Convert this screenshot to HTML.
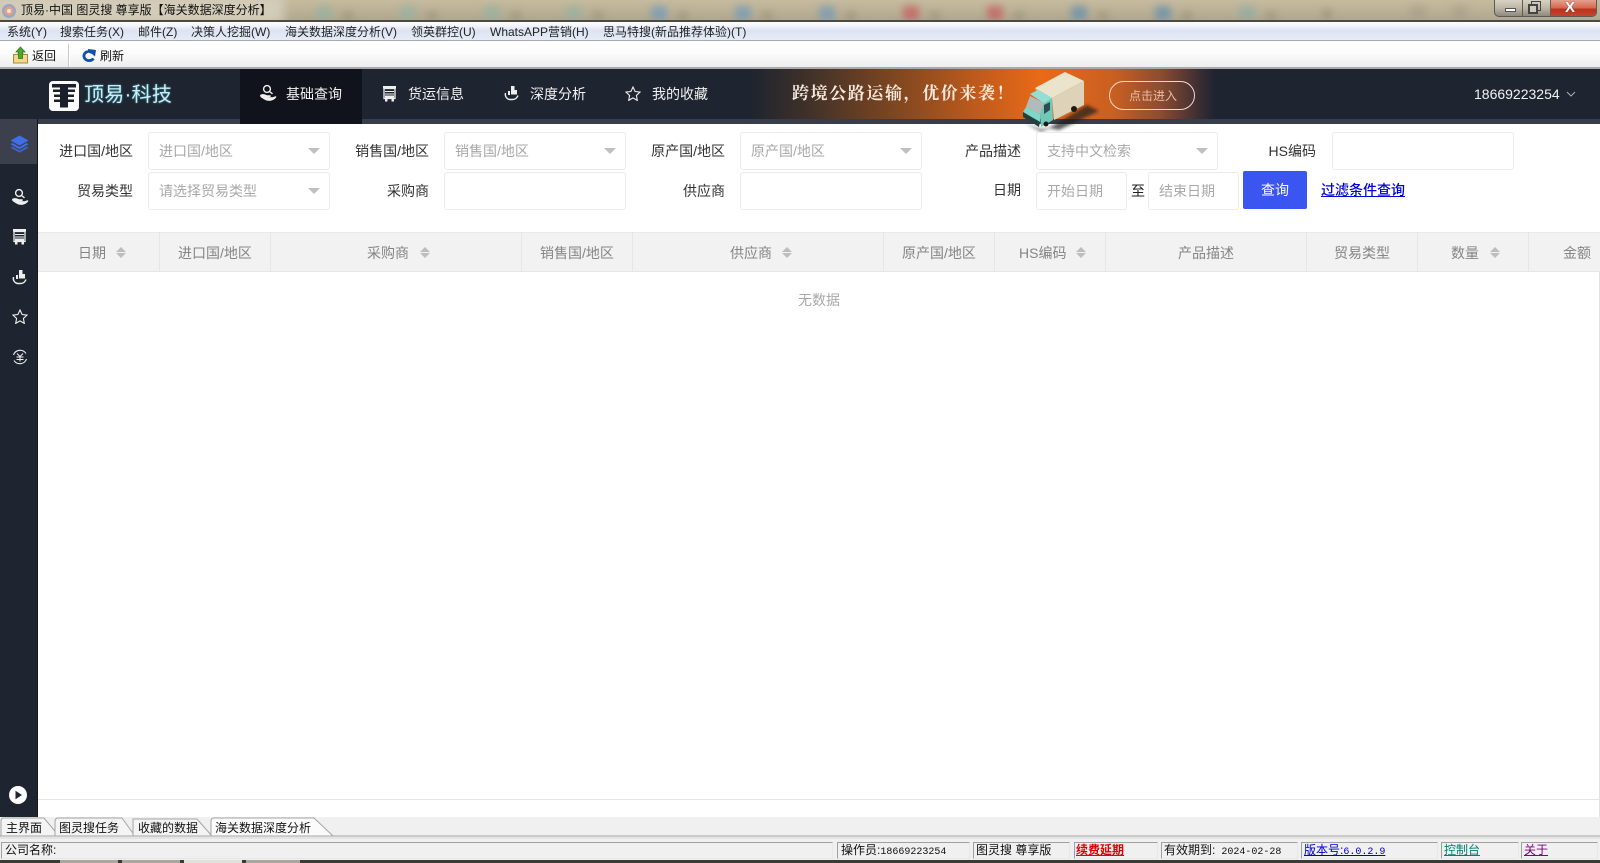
<!DOCTYPE html>
<html lang="zh"><head><meta charset="utf-8"><title>顶易·中国 图灵搜 尊享版</title>
<style>
*{box-sizing:border-box;margin:0;padding:0}
html,body{width:1600px;height:863px;overflow:hidden;background:#fff}
body{position:relative;font-family:"Liberation Sans","Noto Sans CJK SC",sans-serif;font-size:14px;color:#333}
.a{position:absolute}
.t{position:absolute;white-space:nowrap}
.m{font-size:12px;line-height:18px;top:23px;color:#222}
.n{font-size:14px;line-height:20px;top:84px;color:#f2f2f2}
.l{top:0;font-size:14px;line-height:20px;text-align:right;color:#333;white-space:nowrap;position:absolute}
.r1{top:141px}.r2{top:181px}
.i{position:absolute;background:#fff;border:1px solid #ebebeb;border-radius:3px;height:38px;color:#a8a8a8;font-size:14px;line-height:37px;padding-left:10px;white-space:nowrap}
.i.s:after{content:"";position:absolute;right:9px;top:15px;border:6px solid transparent;border-top:6px solid #c0c0c0;border-bottom:0}
.h{position:absolute;top:243px;font-size:14px;line-height:20px;color:#858585;white-space:nowrap}
.c{position:absolute;top:232px;width:1px;height:40px;background:#e6e6e6}
.u{position:absolute;top:247px;width:10px;height:11px}
.u:before,.u:after{content:"";position:absolute;left:0;border:5px solid transparent}
.u:before{top:0;border-top:0;border-bottom:5px solid #bdbdbd}
.u:after{bottom:0;border-bottom:0;border-top:5px solid #bdbdbd}
.st{position:absolute;top:842px;height:17px;background:#f0f0f0;border:1px solid;border-color:#a0a0a0 #e8e8e8 #e8e8e8 #a0a0a0;font-size:12px;line-height:15px;color:#111;white-space:nowrap;padding-left:2px}
.mono{font-family:"Liberation Mono",monospace;font-size:10px}
.blob{position:absolute;filter:blur(4px);border-radius:3px;top:6px;width:16px;height:14px;opacity:.6;box-shadow:24px 3px 0 -3px #8f8873}
</style></head><body>

<!-- title bar -->
<div class="a" style="left:0;top:0;width:1600px;height:21px;overflow:hidden;background:linear-gradient(180deg,#c6bb9f 0,#b9af94 60%,#aea690 100%)">
<div class="blob" style="left:316px;background:#8db3a6"></div>
<div class="blob" style="left:400px;background:#8db3a6"></div>
<div class="blob" style="left:484px;background:#8db3a6"></div>
<div class="blob" style="left:566px;background:#8db3a6"></div>
<div class="blob" style="left:651px;background:#5f95c4"></div>
<div class="blob" style="left:735px;background:#5f95c4"></div>
<div class="blob" style="left:819px;background:#5f95c4"></div>
<div class="blob" style="left:903px;background:#c8454e"></div>
<div class="blob" style="left:987px;background:#c8454e"></div>
<div class="blob" style="left:1071px;background:#4f86b8"></div>
<div class="blob" style="left:1155px;background:#4f86b8"></div>
<div class="blob" style="left:1239px;background:#84aca8"></div>
<div class="blob" style="left:1323px;width:8px;top:10px;height:8px;background:#7d7662;box-shadow:none"></div>
<div class="blob" style="left:1410px;background:#a59c85;box-shadow:none"></div>
<div class="blob" style="left:1452px;background:#a59c85;box-shadow:none"></div>
<div class="a" style="left:-6px;top:-6px;width:290px;height:30px;background:#d2ccb9;filter:blur(5px)"></div>
</div>
<svg class="a" style="left:1px;top:2px" width="16" height="18" viewBox="0 0 16 18"><circle cx="8" cy="9" r="7" fill="#9aa7c4"/><circle cx="8" cy="9" r="4.500" fill="#e8a080"/><circle cx="8" cy="9" r="2" fill="#e8e4e4"/></svg>
<div class="t" style="left:21px;top:1px;font-size:12px;line-height:19px;color:#111">顶易·中国 图灵搜 尊享版【海关数据深度分析】</div>
<!-- window controls -->
<div class="a" style="left:1494px;top:-1px;width:103px;height:18px;border:1px solid #5a5a58;border-radius:0 0 5px 5px;background:linear-gradient(180deg,#d8d2c4 0,#bdb6a4 50%,#8f8a7e 100%);overflow:hidden">
<div class="a" style="left:55px;top:0;width:46px;height:17px;background:linear-gradient(180deg,#e3a090 0,#d96a50 45%,#b8331f 55%,#c8452f 100%);border-left:1px solid #6f5a50"></div>
<div class="a" style="left:27px;top:0;width:1px;height:17px;background:#5f5c55"></div>
<div class="a" style="left:10px;top:8px;width:11px;height:4px;background:#fff;border:1px solid #555"></div>
<div class="a" style="left:36px;top:1px;width:10px;height:10px;border:1px solid #444"></div>
<div class="a" style="left:33px;top:4px;width:10px;height:10px;border:2px solid #444;background:#cfc9b9"></div>
<div class="t" style="left:70px;top:-1px;font:bold 15px/17px 'Liberation Sans',sans-serif;color:#fff;text-shadow:0 0 1px #333">X</div>
</div>
<div class="a" style="left:0;top:20px;width:1600px;height:2px;background:#4c4a44"></div>

<!-- menu -->
<div class="a" style="left:0;top:22px;width:1600px;height:19px;background:linear-gradient(180deg,#fdfdfe 0,#f4f6fb 20%,#dde3f3 45%,#e6ebf6 100%);border-bottom:1px solid #a6aab4"></div>
<div class="t m" style="left:7px">系统(Y)</div>
<div class="t m" style="left:60px">搜索任务(X)</div>
<div class="t m" style="left:138px">邮件(Z)</div>
<div class="t m" style="left:191px">决策人挖掘(W)</div>
<div class="t m" style="left:285px">海关数据深度分析(V)</div>
<div class="t m" style="left:411px">领英群控(U)</div>
<div class="t m" style="left:490px">WhatsAPP营销(H)</div>
<div class="t m" style="left:603px">思马特搜(新品推荐体验)(T)</div>

<!-- toolbar -->
<div class="a" style="left:0;top:41px;width:1600px;height:28px;background:linear-gradient(180deg,#fff 0,#fcfcfc 45%,#eeeeee 100%);border-bottom:2px solid #a9a9a9"></div>
<svg class="a" style="left:12px;top:46px" width="17" height="18" viewBox="0 0 17 18"><path d="M1.500 8.500h4l1-1.500h4l1 1.500h4v8.500h-14z" fill="#f3d888" stroke="#a58a3c"/><path d="M8.500 1l4.500 5h-2.500v6.500h-4v-6.500h-2.500z" fill="#4ea82e" stroke="#2f7a1c" stroke-width=".8"/></svg>
<div class="t" style="left:32px;top:47px;font-size:12px;line-height:18px;color:#111">返回</div>
<div class="a" style="left:68px;top:44px;width:2px;height:23px;background:linear-gradient(90deg,#c8c8c8 50%,#fff 50%)"></div>
<svg class="a" style="left:81px;top:49px" width="15" height="13" viewBox="0 0 15 13"><path d="M12.500 9.500A5.200 4.600 0 1 1 7 2.500" fill="none" stroke="#1450a8" stroke-width="2.800"/><path d="M7 0l8 1-1 6.500-3-2.500-4-1.500z" fill="#1450a8"/></svg>
<div class="t" style="left:100px;top:47px;font-size:12px;line-height:18px;color:#111">刷新</div>

<!-- nav -->
<div class="a" style="left:0;top:69px;width:1600px;height:50px;background:#1e2430"></div>
<div class="a" style="left:0;top:119px;width:1600px;height:5px;background:#393c49"></div>
<div class="a" style="left:750px;top:69px;width:465px;height:50px;background:linear-gradient(90deg,#1e2430 0,#3e3029 55px,#7a4521 140px,#bd5a1c 225px,#e96a18 290px,#c85f22 365px,#8d4c30 410px,#3a2d33 450px,#1e2430 465px)"></div>
<div class="a" style="left:240px;top:69px;width:122px;height:55px;background:#10131b"></div>

<!-- logo -->
<div class="a" style="left:49px;top:81px;width:30px;height:30px;background:#fafafa;border-radius:4px"></div>
<svg class="a" style="left:49px;top:81px" width="30" height="30" viewBox="0 0 30 30"><path d="M3 3h24v3.500H19v2h7v2.500h-7v2.500h6v2.500h-6v2.500h6v2.500h-6v5.500h-8v-5.500H5v-2.500h6v-2.500H5v-2.500h6v-2.500H4v-2.500h7v-2H3z" fill="#1b1f2a"/></svg>
<div class="t" style="left:84px;top:80px;font-size:20px;letter-spacing:.3px;line-height:30px;color:#cdeef0;text-shadow:0 0 2px #3aa7c7">顶易·科技</div>

<!-- nav items -->
<svg class="a" style="left:259px;top:84px" width="18" height="19" viewBox="0 0 18 19"><circle cx="8" cy="5" r="3.400" fill="none" stroke="#f0f0f0" stroke-width="1.400"/><path d="M10.500 7.500l3 2.300" stroke="#f0f0f0" stroke-width="1.400"/><path d="M1 11c2.500-1.500 5-1 7 .3h3c1 0 1 1.700 0 1.700H8l5.500.3 3-1c1 0 1 .8.500 1.300-2 2.400-5 3.600-8 3.200-3-.4-5.500-2.500-7.500-3.800z" fill="#f0f0f0"/></svg>
<div class="t n" style="left:286px">基础查询</div>
<svg class="a" style="left:382px;top:85px" width="15" height="17" viewBox="0 0 15 17"><path d="M1 1h13v2.500H1z" fill="#eee"/><path d="M2 3.500h11v10H2z" fill="none" stroke="#eee" stroke-width="1.300"/><path d="M3 6.500h9M3 9h9" stroke="#eee" stroke-width=".9"/><path d="M3 10.500h9v3H3z" fill="#eee"/><path d="M3 14h2.500v2.500H3zM9.500 14H12v2.500H9.500z" fill="#eee"/></svg>
<div class="t n" style="left:408px">货运信息</div>
<svg class="a" style="left:504px;top:85px" width="15" height="16" viewBox="0 0 15 16"><path d="M7 1h3.500v8.500H7zM10.500 5H13v4.500h-2.500zM4 6h2v4H4z" fill="#eee"/><path d="M1.500 8c-.8 3 1 6 4 6.500h3c2.500 0 4.500-1.500 5.500-4" fill="none" stroke="#eee" stroke-width="1.400"/></svg>
<div class="t n" style="left:530px">深度分析</div>
<svg class="a" style="left:625px;top:86px" width="16" height="15" viewBox="0 0 16 15"><path d="M8 1l2.100 4.500 4.900.6-3.600 3.400.9 4.900L8 11.900l-4.300 2.500.9-4.900L1 6.100l4.900-.6z" fill="none" stroke="#eee" stroke-width="1.100"/></svg>
<div class="t n" style="left:652px">我的收藏</div>

<!-- banner -->
<div class="t" style="left:792px;top:81px;font-family:'Liberation Serif','Noto Serif CJK SC',serif;font-weight:700;font-size:17px;line-height:26px;letter-spacing:1.600px;color:#f6e8dc">跨境公路运输，优价来袭！</div>
<svg class="a" style="left:1015px;top:65px" width="90" height="68" viewBox="0 0 90 68">
<defs><filter id="b" x="-30%" y="-30%" width="160%" height="160%"><feGaussianBlur stdDeviation="1.600"/></filter></defs>
<path d="M34 63L72 40 84 46 44 65z" fill="#1a1a1a" opacity=".7" filter="url(#b)"/>
<path d="M10 58L26 64 38 62 26 67z" fill="#222" opacity=".6" filter="url(#b)"/>
<path d="M20 23L50 7 69 16 37 33z" fill="#ebe4cd"/>
<path d="M37 33L69 16V40L39 55z" fill="#dcd3b8"/>
<path d="M20 23L37 33V38L24 30z" fill="#e2b99a"/>
<path d="M15 29L23 25 37 33 30 39z" fill="#90e0d5"/>
<path d="M11 42L15 31 29 38 25 49z" fill="#b0bcb9"/>
<path d="M8 47L11 42 25 49 25 57z" fill="#80d6c9"/>
<path d="M8 47L25 57 24 62 8 52z" fill="#23403c"/>
<path d="M29 38L37 33 38 55 26 62 25 49z" fill="#6fc9b9"/>
<path d="M29 40L35 37V45L29 49z" fill="#2f4a50"/>
<circle cx="31" cy="59" r="2.500" fill="#1a1a1a"/><circle cx="59" cy="44" r="3" fill="#1a1a1a"/>
</svg>
<div class="a" style="left:1109px;top:81px;width:86px;height:29px;border:1px solid #f3d8c4;border-radius:15px"></div>
<div class="t" style="left:1129px;top:86px;font-size:12px;line-height:20px;color:#e6bfa4">点击进入</div>

<div class="t" style="left:1474px;top:84px;font-size:14px;line-height:20px;color:#f2f2f2">18669223254</div>
<svg class="a" style="left:1566px;top:91px" width="10" height="7" viewBox="0 0 10 7"><path d="M1 1l4 4 4-4" fill="none" stroke="#aab0bb"/></svg>

<!-- sidebar -->
<div class="a" style="left:0;top:119px;width:37px;height:698px;background:#1e2430"></div>
<div class="a" style="left:37px;top:119px;width:1px;height:698px;background:#14171f"></div>
<div class="a" style="left:0;top:119px;width:37px;height:45px;background:#3c3f4c"></div>
<svg class="a" style="left:10px;top:135px" width="19" height="18" viewBox="0 0 19 18"><path d="M9.500 .5L18.500 5.500 9.500 10.500 .5 5.500z" fill="#3f6fe8"/><path d="M2.500 8l7 4 7-4 2 1.200-9 5-9-5z" fill="#3f6fe8"/><path d="M2.500 11.500l7 4 7-4 2 1.200-9 5-9-5z" fill="#3f6fe8" opacity=".75"/></svg>
<svg class="a" style="left:11px;top:188px" width="18" height="19" viewBox="0 0 18 19"><circle cx="8" cy="5" r="3.400" fill="none" stroke="#f0f0f0" stroke-width="1.400"/><path d="M10.500 7.500l3 2.300" stroke="#f0f0f0" stroke-width="1.400"/><path d="M1 11c2.500-1.500 5-1 7 .3h3c1 0 1 1.700 0 1.700H8l5.500.3 3-1c1 0 1 .8.500 1.300-2 2.400-5 3.600-8 3.200-3-.4-5.500-2.500-7.500-3.800z" fill="#f0f0f0"/></svg>
<svg class="a" style="left:12px;top:228px" width="15" height="17" viewBox="0 0 15 17"><path d="M1 1h13v2.500H1z" fill="#eee"/><path d="M2 3.500h11v10H2z" fill="none" stroke="#eee" stroke-width="1.300"/><path d="M3 6.500h9M3 9h9" stroke="#eee" stroke-width=".9"/><path d="M3 10.500h9v3H3z" fill="#eee"/><path d="M3 14h2.500v2.500H3zM9.500 14H12v2.500H9.500z" fill="#eee"/></svg>
<svg class="a" style="left:12px;top:269px" width="15" height="16" viewBox="0 0 15 16"><path d="M7 1h3.500v8.500H7zM10.500 5H13v4.500h-2.500zM4 6h2v4H4z" fill="#eee"/><path d="M1.500 8c-.8 3 1 6 4 6.500h3c2.500 0 4.500-1.500 5.500-4" fill="none" stroke="#eee" stroke-width="1.400"/></svg>
<svg class="a" style="left:12px;top:309px" width="16" height="15" viewBox="0 0 16 15"><path d="M8 1l2.100 4.500 4.900.6-3.600 3.400.9 4.900L8 11.900l-4.300 2.500.9-4.900L1 6.100l4.900-.6z" fill="none" stroke="#eee" stroke-width="1.100"/></svg>
<svg class="a" style="left:12px;top:349px" width="16" height="16" viewBox="0 0 16 16"><path d="M1.500 6A7 7 0 0 1 14 4.500M14.500 10A7 7 0 0 1 2 11.500" fill="none" stroke="#eee" stroke-width="1.100"/><path d="M5 4.500l3 3 3-3M4.500 8h7M4.500 10.500h7M8 7.500v5" fill="none" stroke="#eee" stroke-width="1"/></svg>
<svg class="a" style="left:9px;top:786px" width="18" height="18" viewBox="0 0 18 18"><circle cx="9" cy="9" r="9" fill="#fff"/><path d="M6.500 4.800L13 9 6.500 13.200z" fill="#1e2430"/></svg>

<!-- form -->
<div class="l r1" style="left:38px;width:95px">进口国/地区</div>
<div class="i s" style="left:148px;top:132px;width:182px">进口国/地区</div>
<div class="l r1" style="left:334px;width:95px">销售国/地区</div>
<div class="i s" style="left:444px;top:132px;width:182px">销售国/地区</div>
<div class="l r1" style="left:630px;width:95px">原产国/地区</div>
<div class="i s" style="left:740px;top:132px;width:182px">原产国/地区</div>
<div class="l r1" style="left:926px;width:95px">产品描述</div>
<div class="i s" style="left:1036px;top:132px;width:182px">支持中文检索</div>
<div class="l r1" style="left:1222px;width:94px">HS编码</div>
<div class="i" style="left:1332px;top:132px;width:182px"></div>

<div class="l r2" style="left:38px;width:95px">贸易类型</div>
<div class="i s" style="left:148px;top:172px;width:182px">请选择贸易类型</div>
<div class="l r2" style="left:334px;width:95px">采购商</div>
<div class="i" style="left:444px;top:172px;width:182px"></div>
<div class="l r2" style="left:630px;width:95px">供应商</div>
<div class="i" style="left:740px;top:172px;width:182px"></div>
<div class="l" style="left:926px;top:180px;width:95px">日期</div>
<div class="i" style="left:1036px;top:172px;width:91px">开始日期</div>
<div class="t" style="left:1131px;top:181px;font-size:14px;line-height:20px;color:#222">至</div>
<div class="i" style="left:1148px;top:172px;width:91px">结束日期</div>
<div class="a" style="left:1243px;top:171px;width:64px;height:38px;background:#3b55f0;border-radius:2px;color:#fff;font-size:14px;line-height:38px;text-align:center">查询</div>
<div class="t" style="left:1321px;top:180px;font-size:14px;line-height:20px;color:#0000d8;text-decoration:underline;font-weight:500">过滤条件查询</div>

<!-- table header -->
<div class="a" style="left:38px;top:232px;width:1562px;height:40px;background:#f2f2f2;border-top:1px solid #e9e9e9;border-bottom:1px solid #e6e6e6"></div>
<div class="c" style="left:159px"></div><div class="c" style="left:270px"></div><div class="c" style="left:521px"></div><div class="c" style="left:632px"></div><div class="c" style="left:883px"></div><div class="c" style="left:994px"></div><div class="c" style="left:1105px"></div><div class="c" style="left:1306px"></div><div class="c" style="left:1417px"></div><div class="c" style="left:1528px"></div>
<div class="h" style="left:78px">日期</div><div class="u" style="left:116px"></div>
<div class="h" style="left:178px">进口国/地区</div>
<div class="h" style="left:367px">采购商</div><div class="u" style="left:420px"></div>
<div class="h" style="left:540px">销售国/地区</div>
<div class="h" style="left:730px">供应商</div><div class="u" style="left:782px"></div>
<div class="h" style="left:902px">原产国/地区</div>
<div class="h" style="left:1019px">HS编码</div><div class="u" style="left:1076px"></div>
<div class="h" style="left:1178px">产品描述</div>
<div class="h" style="left:1334px">贸易类型</div>
<div class="h" style="left:1451px">数量</div><div class="u" style="left:1490px"></div>
<div class="h" style="left:1563px">金额</div>
<div class="t" style="left:798px;top:290px;font-size:14px;line-height:20px;color:#a8a8a8">无数据</div>
<div class="a" style="left:1599px;top:272px;width:1px;height:545px;background:#e2e2e2"></div>
<div class="a" style="left:38px;top:799px;width:1562px;height:1px;background:#e6e6e6"></div>

<!-- tabs -->
<div class="a" style="left:0;top:817px;width:1600px;height:46px;background:#f0f0f0"></div>
<svg class="a" style="left:0;top:817px" width="1600" height="24" viewBox="0 0 1600 24">
<path d="M1 19V4q0-3 3-3h40l15 18z" fill="#f4f4f4" stroke="#a4a4a4"/>
<path d="M55 19V5q0-4 3-4h64l13 18z" fill="#f4f4f4" stroke="#a4a4a4"/>
<path d="M133 2h64l15 17h-79z" fill="#f4f4f4" stroke="#a4a4a4"/>
<path d="M211 19V4q0-3 3-3h100l19 18z" fill="#fbfbfb" stroke="#a4a4a4"/>
<path d="M0 19H211M333 19H1600" stroke="#a4a4a4" fill="none"/>
<path d="M0 21H1600" stroke="#d9d9d9"/>
</svg>
<div class="t" style="left:6px;top:820px;font-size:12px;line-height:17px;color:#111">主界面</div>
<div class="t" style="left:59px;top:820px;font-size:12px;line-height:17px;color:#111">图灵搜任务</div>
<div class="t" style="left:138px;top:820px;font-size:12px;line-height:17px;color:#111">收藏的数据</div>
<div class="t" style="left:215px;top:820px;font-size:12px;line-height:17px;color:#111">海关数据深度分析</div>

<!-- status bar -->
<div class="st" style="left:1px;width:832px;padding-left:3px">公司名称:</div>
<div class="st" style="left:837px;width:133px;padding-left:3px">操作员:<span class="mono">18669223254</span></div>
<div class="st" style="left:973px;width:97px">图灵搜 尊享版</div>
<div class="st" style="left:1074px;width:84px;padding-left:1px;color:#e00000;font-weight:700;text-decoration:underline">续费延期</div>
<div class="st" style="left:1161px;width:137px">有效期到:<span class="mono"> 2024-02-28</span></div>
<div class="st" style="left:1301px;width:137px;color:#0000c8;text-decoration:underline">版本号:<span class="mono">6.0.2.9</span></div>
<div class="st" style="left:1441px;width:78px;color:#008070;text-decoration:underline">控制台</div>
<div class="st" style="left:1521px;width:77px;color:#800080;text-decoration:underline">关于</div>
<!-- taskbar sliver -->
<div class="a" style="left:0;top:860px;width:1600px;height:3px;background:#3a3a36"></div>
<div class="a" style="left:60px;top:860px;width:58px;height:3px;background:#a8a8a0"></div>
<div class="a" style="left:122px;top:860px;width:58px;height:3px;background:#a8a8a0"></div>
<div class="a" style="left:184px;top:860px;width:58px;height:3px;background:#e0e0dc"></div>
<div class="a" style="left:246px;top:860px;width:54px;height:3px;background:#a8a8a0"></div>
</body></html>
